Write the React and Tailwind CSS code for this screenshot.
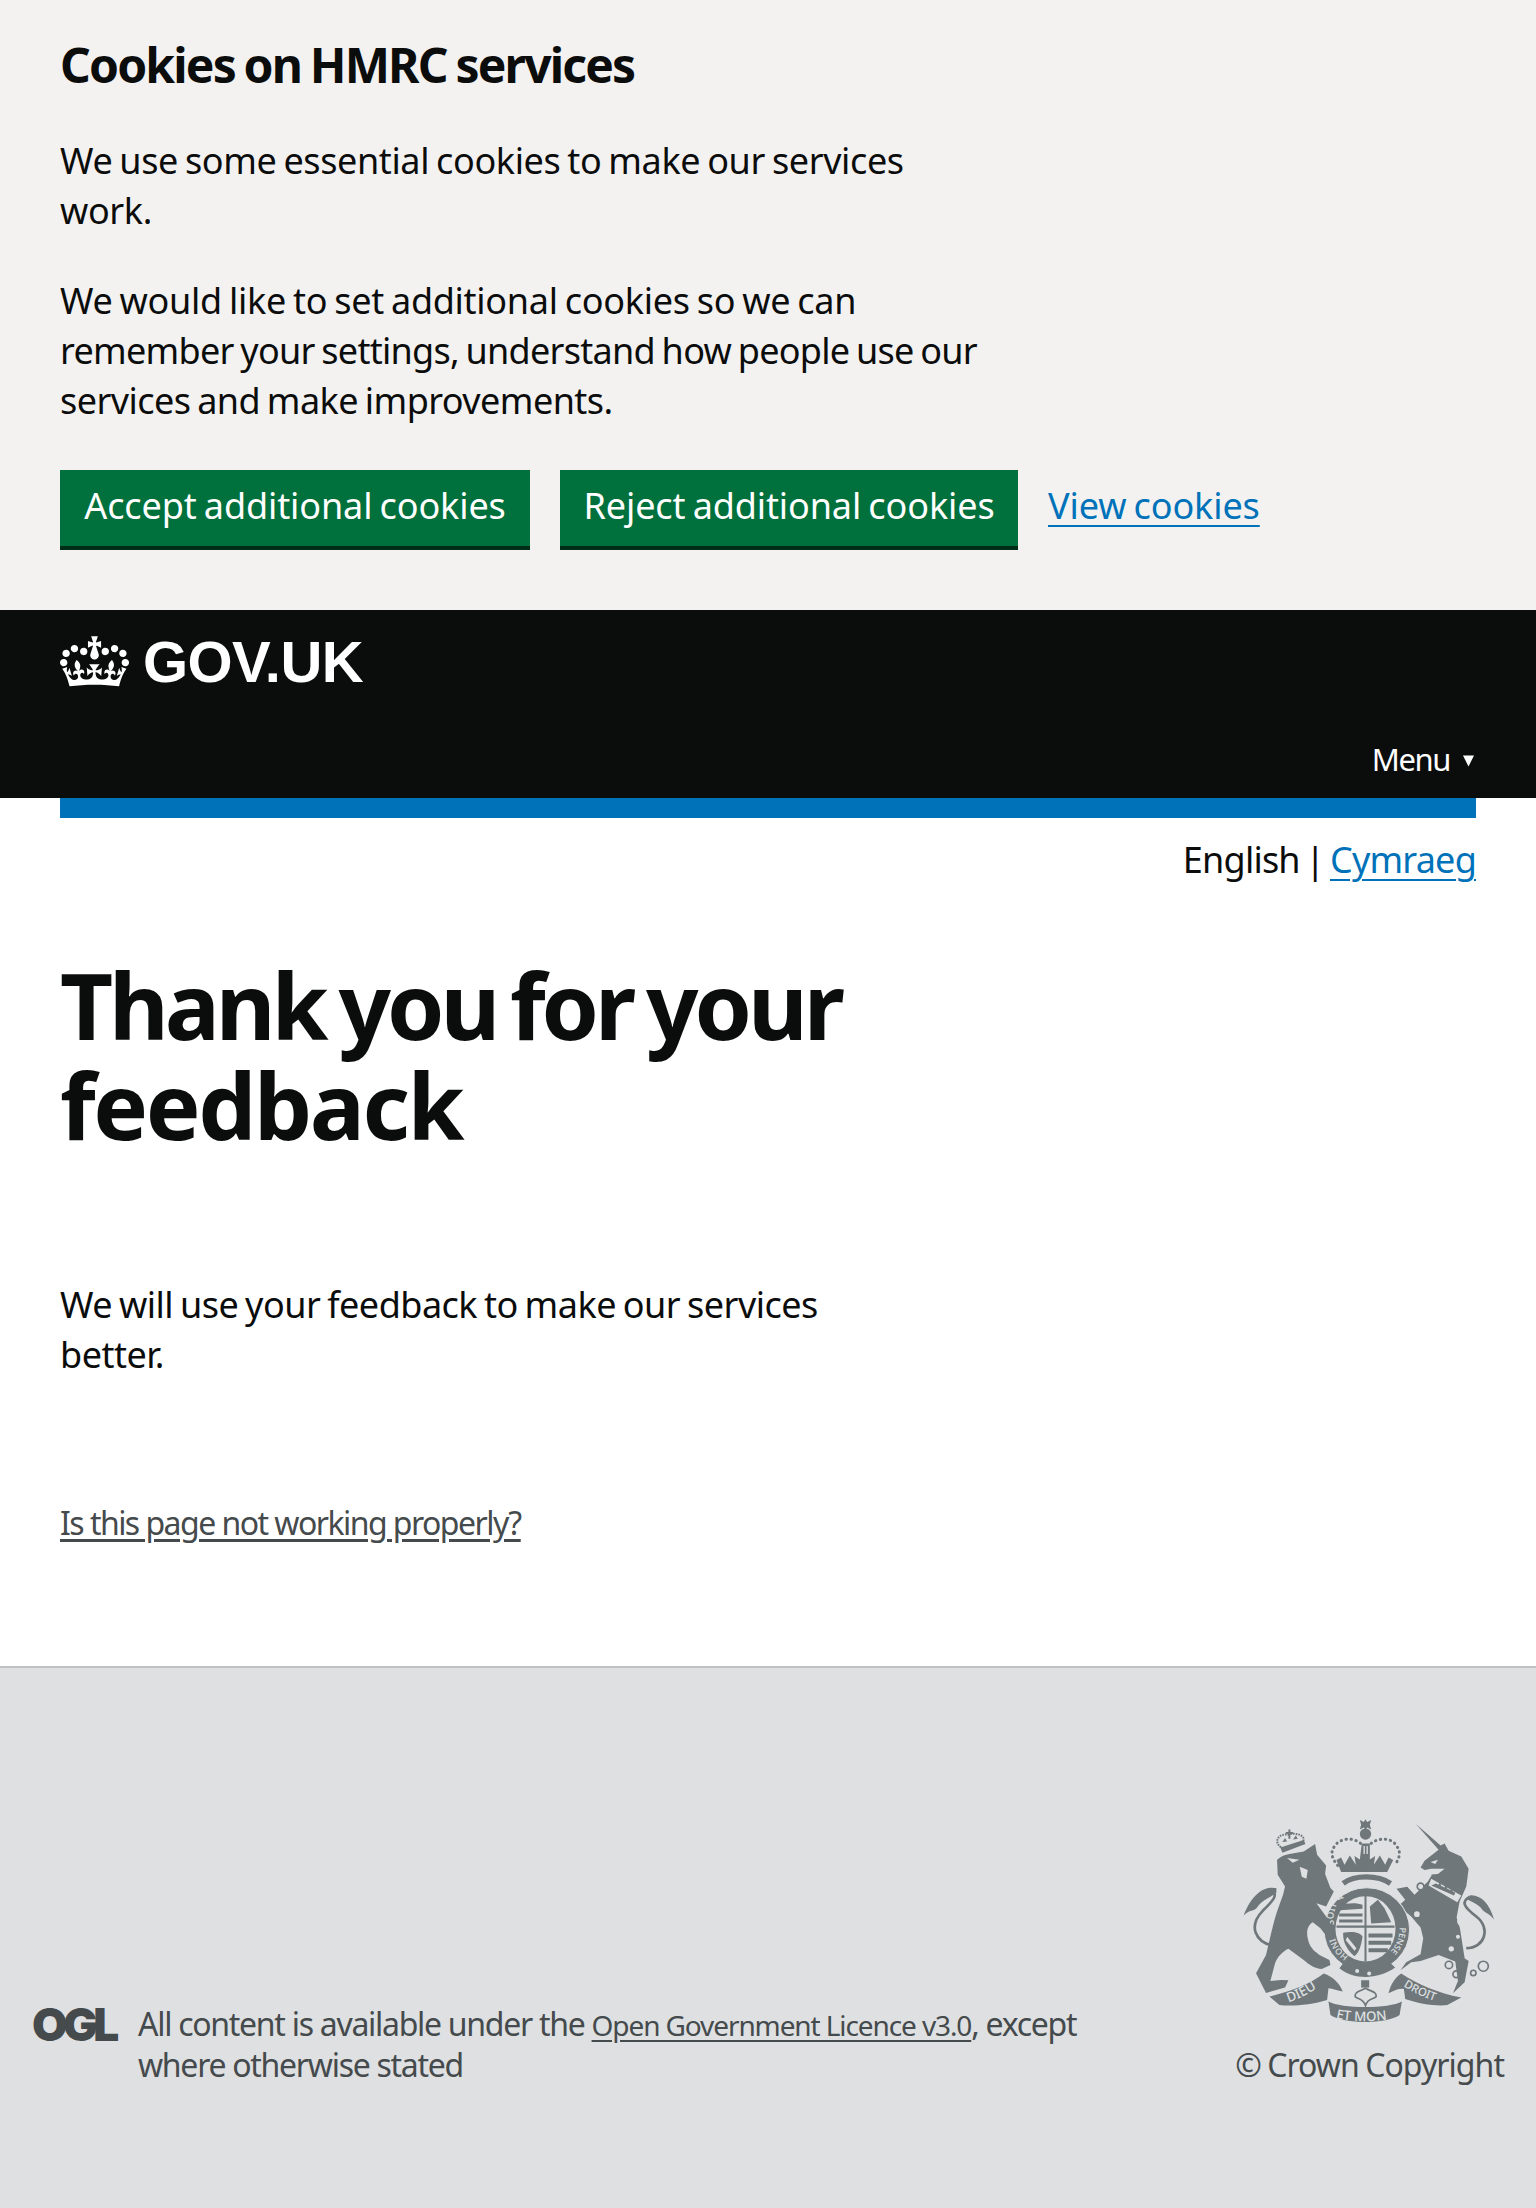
import React from 'react';

const sans = "font-['Noto_Sans',sans-serif]";
const base = 'text-[36px] leading-[50px] [word-spacing:-2px]';
const body = `${base} tracking-[-0.0105em]`;
const action = `${base} tracking-[-0.003em]`;

const Crown = () => (
  <svg viewBox="0 0 132 97" className="w-[69px] h-[51px] shrink-0 text-white">
    <path
      fill="currentColor"
      fillRule="evenodd"
      d="M25 30.2c3.5 1.5 7.7-.2 9.1-3.7 1.5-3.6-.2-7.8-3.9-9.2-3.6-1.4-7.6.3-9.1 3.9-1.4 3.5.3 7.5 3.9 9zM9 39.5c3.6 1.5 7.8-.2 9.2-3.7 1.5-3.6-.2-7.8-3.9-9.1-3.6-1.5-7.6.2-9.1 3.8-1.4 3.5.3 7.5 3.8 9zM4.4 57.2c3.5 1.5 7.7-.2 9.1-3.8 1.5-3.6-.2-7.7-3.9-9.1-3.5-1.5-7.6.3-9.1 3.8-1.4 3.5.3 7.6 3.9 9.1zm38.3-21.4c3.5 1.5 7.7-.2 9.1-3.8 1.5-3.6-.2-7.7-3.9-9.1-3.6-1.5-7.6.3-9.1 3.8-1.3 3.6.4 7.7 3.9 9.1zm64.4-5.6c-3.6 1.5-7.8-.2-9.1-3.7-1.5-3.6.2-7.8 3.8-9.2 3.6-1.4 7.7.3 9.2 3.9 1.3 3.5-.4 7.5-3.9 9zm15.9 9.3c-3.6 1.5-7.7-.2-9.1-3.7-1.5-3.6.2-7.8 3.7-9.1 3.6-1.5 7.7.2 9.2 3.8 1.5 3.5-.3 7.5-3.8 9zm4.7 17.7c-3.6 1.5-7.8-.2-9.2-3.8-1.5-3.6.2-7.7 3.9-9.1 3.6-1.5 7.7.3 9.2 3.8 1.3 3.5-.4 7.6-3.9 9.1zM89.3 35.8c-3.6 1.5-7.8-.2-9.2-3.8-1.4-3.6.2-7.7 3.9-9.1 3.6-1.5 7.7.3 9.2 3.8 1.4 3.6-.3 7.7-3.9 9.1zM69.7 17.7l8.9 4.7V9.3l-8.9 2.8c-.2-.3-.5-.6-.9-.9L72.4 0H59.6l3.6 11.2c-.3.3-.6.5-.9.9l-8.8-2.8v13.1l8.8-4.7c.3.3.6.7.9.9l-5 15.4v.1c-.2.8-.4 1.6-.4 2.4 0 4.1 3.1 7.5 7 8.1h.2c.3 0 .7.1 1 .1.4 0 .7 0 1-.1h.2c4-.6 7.1-4.1 7.1-8.1 0-.8-.1-1.7-.4-2.4V34l-5.1-15.4c.4-.2.7-.6 1-.9zM66 92.8c16.9 0 32.8 1.1 47.1 3.2 4-16.9 8.9-26.7 14-33.5l-9.6-3.4c1 4.9 1.1 7.2 0 10.2-1.5-1.4-3-4.3-4.2-8.7L108.6 76c2.8-2 5-3.2 7.5-3.3-4.4 9.4-10 11.9-13.6 11.2-4.3-.8-6.3-4.6-5.6-7.9 1-4.7 5.7-5.9 8-.5 4.3-8.7-3-11.4-7.6-8.8 7.1-7.2 7.9-13.5 2.1-21.1-8 6.1-8.1 12.3-4.5 20.8-4.7-5.4-12.1-2.5-9.5 6.2 3.4-5.2 7.9-2 7.2 3.1-.6 4.3-6.4 7.8-13.5 7.2-10.3-.9-10.9-8-11.2-13.8 2.5-.5 7.1 1.8 11 7.3L80.2 60c-4.1 4.4-8 5.3-12.3 5.4 1.4-4.4 8-11.6 8-11.6H55.5s6.4 7.2 7.9 11.6c-4.2-.1-8-1-12.3-5.4l1.4 16.4c3.9-5.5 8.5-7.7 10.9-7.3-.3 5.8-.9 12.8-11.1 13.8-7.2.6-12.9-2.9-13.5-7.2-.7-5 3.8-8.3 7.1-3.1 2.7-8.7-4.6-11.6-9.4-6.2 3.7-8.5 3.6-14.7-4.6-20.8-5.8 7.6-5 13.9 2.2 21.1-4.7-2.6-11.9.1-7.7 8.8 2.3-5.5 7.1-4.2 8.1.5.7 3.3-1.3 7.1-5.7 7.9-3.5.7-9-1.8-13.5-11.2 2.5.1 4.7 1.3 7.5 3.3l-4.7-15.4c-1.2 4.4-2.7 7.2-4.3 8.7-1.1-3-.9-5.3 0-10.2l-9.5 3.4c5 6.9 9.9 16.7 14 33.5 14.8-2.1 30.8-3.2 47.7-3.2z"
    />
  </svg>
);

// coat of arms, drawn in the coordinates of a 3x crop
const CoatOfArms = () => {
  const ink = '#6f777b';
  const bg = '#dee0e2';
  const f = "font-['Noto_Sans',sans-serif] font-medium";
  return (
    <svg viewBox="130 80 770 620" className="w-[257px] h-[207px]">
      {/* unicorn */}
      <path fill={ink} d="M654 98 L728 162 L740 156 L752 178 L790 195 L812 232 L805 285 L785 330 L776 378 L786 410 L800 500 L812 508 L800 572 L765 605 L780 568 L772 510 L722 490 L668 508 L640 512 L608 536 L625 512 L668 488 L676 440 L668 408 L640 375 L612 352 L600 345 L622 325 L596 292 L628 286 L650 310 L690 270 L702 250 L668 228 L680 208 L722 175 Z" />
      <path fill={bg} d="M698 212 L720 205 L712 218 Z M668 238 L700 232 L740 232 L720 248 L690 250 Z" />
      <path fill={bg} d="M700 262 L790 312 L778 332 L692 282 Z" />
      <path fill={ink} d="M714 276 l8 4 l4 -10 l4 14 l10 4 l4 -10 l4 14 l10 4 l4 -10 l2 14 l8 4 l-4 8 L700 282 Z" />
      <circle cx="790" cy="390" r="10" fill="none" stroke={bg} strokeWidth="5" />
      <circle cx="780" cy="436" r="6" fill={bg} />
      <circle cx="760" cy="472" r="8" fill={bg} />
      <circle cx="668" cy="285" r="10" fill={bg} stroke={ink} strokeWidth="5" />
      <circle cx="657" cy="368" r="11" fill={bg} stroke={ink} strokeWidth="5" />
      <circle cx="753" cy="520" r="11" fill="none" stroke={ink} strokeWidth="5" />
      <circle cx="775" cy="548" r="10" fill="none" stroke={ink} strokeWidth="5" />
      <circle cx="826" cy="544" r="8" fill="none" stroke={ink} strokeWidth="5" />
      <circle cx="856" cy="524" r="15" fill="none" stroke={ink} strokeWidth="5" />
      <path fill="none" stroke={ink} strokeWidth="8" d="M805 470 C860 470 880 410 835 375 C795 345 790 330 815 316" />
      <path fill={ink} d="M815 312 C845 308 875 335 888 384 C870 360 860 368 848 348 C835 335 820 330 808 324 Z" />
      {/* garter and shield */}
      <ellipse cx="507" cy="415" rx="128" ry="126" fill={ink} stroke={bg} strokeWidth="3" />
      <ellipse cx="503" cy="412" rx="90" ry="98" fill={bg} />
      <path fill={ink} d="M416 402 h174 v7 h-174 Z M500 312 h6 v198 h-6 Z" />
      <path fill={ink} d="M428 342 C450 332 480 334 494 340 L494 352 L426 356 Z M424 366 h70 v9 h-70 Z M424 384 h70 v9 h-70 Z M516 345 L540 325 L560 350 L580 392 L520 396 Z M512 426 h72 v12 h-72 Z M512 448 h68 v12 h-68 Z M512 470 h58 v12 h-58 Z" />
      <path fill={ink} d="M436 424 C460 418 490 422 494 436 C490 465 482 485 470 494 C452 480 434 455 436 424 Z" />
      <path fill={bg} d="M448 436 L476 470 L470 478 L444 446 Z" />
      <path id="garter-top" d="M409 400 A97 97 0 1 1 601 390" fill="none" />
      <path id="garter-right" d="M605 408 A98 98 0 0 1 560 494" fill="none" />
      <path id="garter-left" d="M452 494 A97 97 0 0 1 412 440" fill="none" />
      <text fill={bg} className={f} fontSize="29"><textPath href="#garter-top">SOIT QUI MAL Y</textPath></text>
      <text fill={bg} className={f} fontSize="26"><textPath href="#garter-right">PENSE</textPath></text>
      <text fill={bg} className={f} fontSize="26"><textPath href="#garter-left">HONI</textPath></text>
      <path fill={ink} d="M440 510 C470 545 540 545 575 512 L592 528 C540 565 465 565 425 530 Z" />
      <circle cx="478" cy="538" r="6" fill={bg} />
      <circle cx="514" cy="546" r="6" fill={bg} />
      {/* lion */}
      <path fill={ink} d="M238 205 C250 195 262 190 275 188 L318 180 L352 158 L358 190 L385 222 L382 248 L398 290 L408 300 L385 345 L356 335 L392 385 L412 425 L392 442 L368 410 L345 392 C330 400 325 420 330 440 C335 465 345 475 365 490 L395 505 L398 520 L372 532 C350 530 335 520 318 505 L272 472 C255 480 240 495 232 515 L218 568 L250 565 L272 566 L262 588 L205 604 L175 545 L205 490 C215 450 225 400 238 360 L256 310 L262 285 L240 250 Z" />
      <path fill={bg} d="M268 200 L305 205 L285 214 Z M306 226 L330 236 L326 262 L312 256 Z" />
      <path fill="none" stroke={ink} strokeWidth="8" d="M222 462 C175 450 150 405 195 358 C232 322 240 310 222 296" />
      <path fill={ink} d="M236 290 C205 283 165 300 138 372 C160 350 170 362 180 345 C195 325 215 320 236 304 Z" />
      {/* lion crown */}
      <path fill={ink} d="M248 168 L318 146 L323 158 L254 184 Z" />
      <path fill="none" stroke={ink} strokeWidth="6" strokeDasharray="5 3" d="M250 168 C225 150 245 125 270 130 C295 122 325 132 316 150" />
      <path fill={ink} d="M264 122 h8 v-8 h6 v8 h8 v6 h-8 v14 h-6 v-14 h-8 Z M254 152 l8 -12 l6 10 Z M286 144 l8 -12 l6 10 Z" />
      {/* royal crown */}
      <path fill={ink} d="M486 86 L498 92 L503 84 L508 92 L520 86 L516 100 L520 114 L508 108 L503 116 L498 108 L486 114 L490 100 Z" />
      <circle cx="503" cy="128" r="17" fill={ink} />
      <path fill="none" stroke={ink} strokeWidth="9" strokeLinecap="round" strokeDasharray="1 14" d="M488 156 C465 136 425 140 410 165 C395 185 405 205 420 222 M520 156 C545 136 585 140 597 165 C612 185 602 205 590 222" />
      <path fill={ink} d="M492 156 h24 v48 l16 -10 l-4 26 l18 -28 l16 28 l10 -22 l14 8 l-18 36 H430 l-14 -36 l14 -8 l10 22 l16 -28 l18 28 l-4 -26 l16 10 Z" />
      <path fill={bg} d="M497 164 h4 v24 h-4 Z M506 164 h4 v24 h-4 Z" />
      <path fill="none" stroke={ink} strokeWidth="16" d="M436 276 C470 250 540 250 578 276" />
      {/* motto ribbons */}
      <path fill={ink} d="M215 615 C280 600 340 575 378 546 C405 555 425 575 435 600 C420 598 405 590 392 590 L388 625 C340 640 280 645 245 640 Z" />
      <path fill={ink} d="M790 618 C720 605 660 578 610 546 C590 560 578 580 572 605 C590 596 605 590 618 592 L622 622 C660 636 720 645 748 640 Z" />
      <path fill={ink} d="M392 630 C430 652 575 652 612 630 L605 670 C565 698 440 698 398 670 Z" />
      <path fill={ink} d="M490 566 h24 v22 h-24 Z" />
      <path fill={bg} stroke={ink} strokeWidth="5" d="M503 590 C485 600 470 600 472 615 C482 625 495 618 503 642 C510 618 525 625 535 615 C537 600 520 600 503 590 Z" />
      <path id="motto-left" d="M272 632 C310 620 345 600 382 572" fill="none" />
      <path id="motto-right" d="M616 584 C650 605 700 628 750 640" fill="none" />
      <path id="motto-mid" d="M414 680 C460 692 550 692 600 676" fill="none" />
      <text fill={bg} fontSize="40" className={f}><textPath href="#motto-left">DIEU</textPath></text>
      <text fill={bg} fontSize="34" className={f}><textPath href="#motto-right">DROIT</textPath></text>
      <text fill={bg} fontSize="40" className={f}><textPath href="#motto-mid">ET MON</textPath></text>
    </svg>
  );
};

const CookieButton = ({ children, width }) => (
  <button className={`${width} h-[80px] pb-1 bg-[#00703c] border-b-4 border-[#002d18] text-white ${action}`}>
    {children}
  </button>
);

export default function App() {
  return (
    <div className={`${sans} min-h-[2208px] flex flex-col bg-white text-[#0b0c0c]`}>
      <section className="h-[610px] shrink-0 bg-[#f3f2f1] px-[60px] pt-10">
        <h2 className="text-[48px] leading-[50px] font-bold tracking-[-0.038em] [word-spacing:-2px]">Cookies on HMRC services</h2>
        <p className={`mt-[46px] ${body}`}>
          We use some essential cookies to make our services
          <br />
          work.
        </p>
        <p className={`mt-10 ${base}`}>
          <span className="tracking-[-0.008em]">We would like to set additional cookies so we can</span>
          <br />
          <span className="tracking-[-0.02em]">remember your settings, understand how people use our</span>
          <br />
          <span className="tracking-[-0.0155em]">services and make improvements.</span>
        </p>
        <div className="mt-[44px] flex items-start gap-[30px]">
          <CookieButton width="w-[470px]">Accept additional cookies</CookieButton>
          <CookieButton width="w-[458px]">Reject additional cookies</CookieButton>
          <a href="#" className={`h-[72px] flex items-center text-[#0072b9] underline underline-offset-[6px] decoration-2 ${action}`}>
            View cookies
          </a>
        </div>
      </section>

      <header className="h-[188px] shrink-0 bg-[#0b0c0c] px-[60px] text-white flex flex-col">
        <div className="mt-[26px] flex items-center gap-[14px]">
          <Crown />
          <span className="font-['Liberation_Sans',sans-serif] font-bold text-[58px] leading-[51px] tracking-[-0.01em]">GOV.UK</span>
        </div>
        <div className="mt-auto mb-[19px] pr-0.5 flex items-center justify-end gap-[13px] text-[31px] leading-[40px] tracking-[-0.045em]">
          <span>Menu</span>
          <svg viewBox="0 0 12 12" className="w-[11px] h-3 mt-1">
            <path d="M0 0h12L6 12z" fill="#fff" />
          </svg>
        </div>
      </header>

      <main className="flex-1 px-[60px]">
        <div className="h-5 bg-[#0072b9]" />
        <div className="mt-[17px] text-right text-[36px] leading-[50px] tracking-[-0.022em] [word-spacing:-3px]">
          English | <a href="#" className="text-[#0072b9] underline underline-offset-[6px] decoration-2">Cymraeg</a>
        </div>
        <h1 className="mt-[70px] text-[92px] leading-[100px] font-bold tracking-[-0.026em]">
          <span className="tracking-[-0.044em] [word-spacing:-6px]">Thank you for your</span>
          <br />
          feedback
        </h1>
        <p className={`mt-[125px] ${base} tracking-[-0.014em]`}>
          We will use your feedback to make our services
          <br />
          better.
        </p>
        <a href="#" className="block mt-[123px] text-[32px] leading-[40px] tracking-[-0.048em] text-[#454a4c] underline underline-offset-4">
          Is this page not working properly?
        </a>
      </main>

      <footer className="h-[542px] shrink-0 border-t-2 border-[#bfc1c3] bg-[#dee0e2] text-[#454a4c] pl-8 pr-8 flex items-end justify-between pb-[123px]">
        <div className="flex items-start gap-[20px]">
          <span className="font-['Inter',sans-serif] font-black text-[46px] leading-[40px] tracking-[-0.1em] w-[86px]">OGL</span>
          <p className="text-[32px] leading-[40px] tracking-[-0.04em]">
            All content is available under the{' '}
            <a href="#" className="underline underline-offset-4 text-[28px] tracking-[-1.1px]">Open Government Licence v3.0</a>, except
            <br />
            where otherwise stated
          </p>
        </div>
        <div className="flex flex-col items-center">
          <CoatOfArms />
          <span className="mt-5 text-[32px] leading-[40px] tracking-[-0.03em] [word-spacing:-1px]">© Crown Copyright</span>
        </div>
      </footer>
    </div>
  );
}
